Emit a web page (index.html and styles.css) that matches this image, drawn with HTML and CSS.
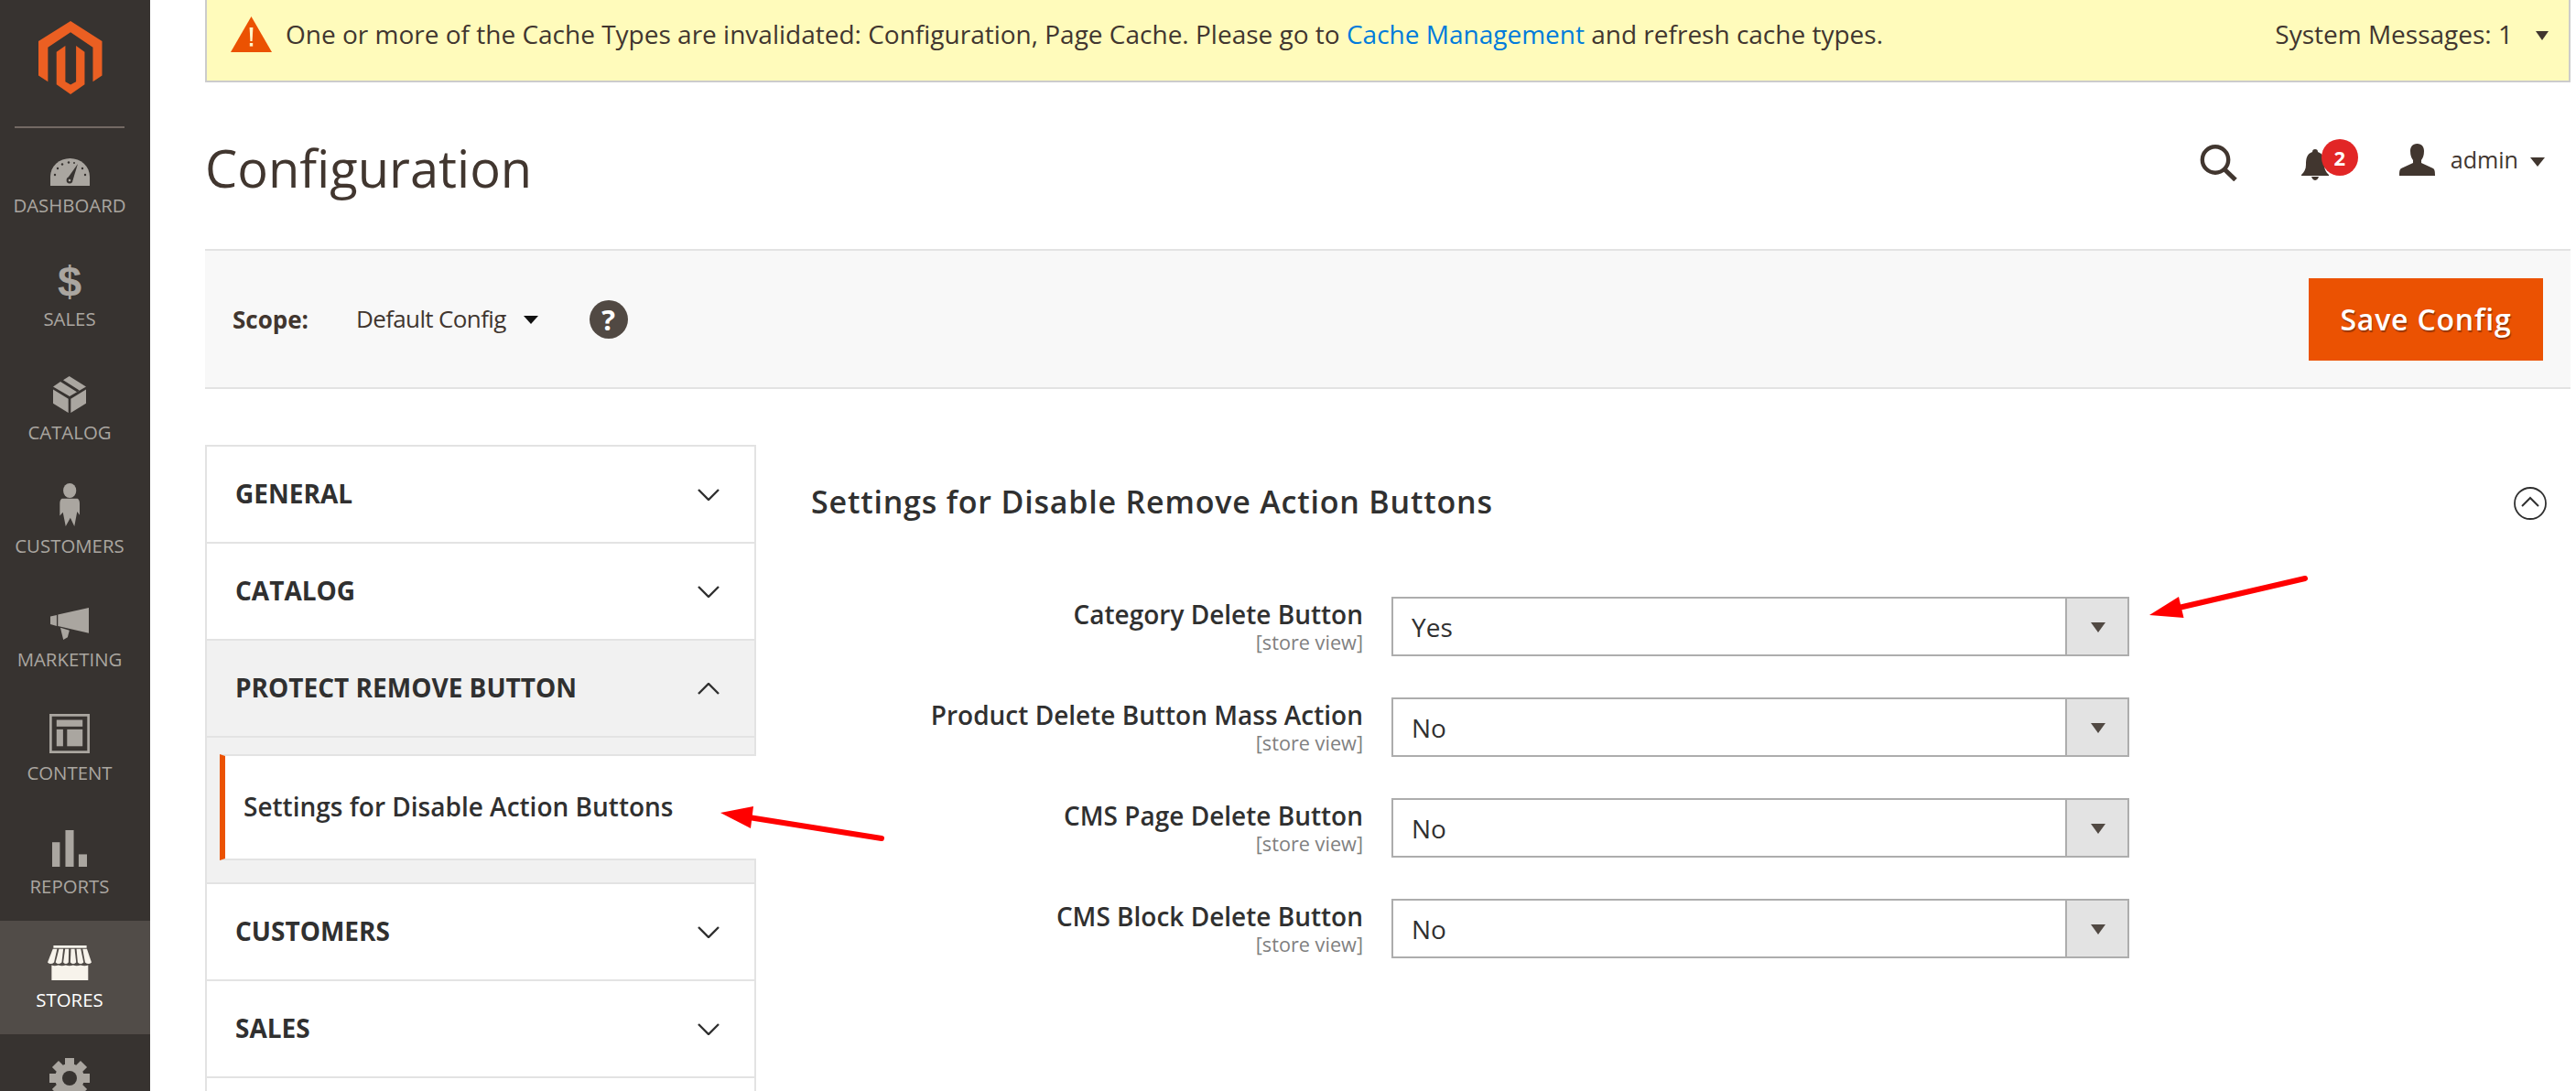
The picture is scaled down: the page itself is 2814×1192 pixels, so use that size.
FILE: index.html
```html
<!DOCTYPE html>
<html lang="en">
<head>
<meta charset="utf-8">
<title>Configuration</title>
<link rel="stylesheet" href="styles.css">
</head>
<body>
<div class="page">
  <aside class="sidebar">
    <div class="logo">
      <svg class="logo-svg" viewBox="127 60 208 208" preserveAspectRatio="none"><path fill="#eb5f22" d="M232 60L335 117V215L305 232V135L232 92L158 135V232L127 215V117Z"/><path fill="#eb5f22" d="M186 148L215 130V232L232 241L250 232V130L278 148V240L232 268L186 240Z"/></svg>
    </div>
    <nav class="menu">
      <a class="menu-item first">
        <svg class="ic" width="43" height="30" viewBox="0 0 43 30"><path fill="#aaa6a0" d="M0 30V20A21.5 20 0 0 1 43 20V30Z"/><g fill="#373330"><path d="M30 6L24.5 24L19 21.5Z"/><circle cx="21" cy="24" r="3.4"/><circle cx="5" cy="18" r="1.2"/><circle cx="8" cy="11" r="1.2"/><circle cx="13" cy="6.5" r="1.2"/><circle cx="20" cy="4.5" r="1.2"/><circle cx="26" cy="5" r="1"/><circle cx="35" cy="11" r="1.2"/><circle cx="38" cy="18" r="1.2"/></g><circle cx="21" cy="24" r="1.3" fill="#aaa6a0"/></svg>
        <span>Dashboard</span>
      </a>
      <a class="menu-item">
        <span class="dollar">$</span>
        <span>Sales</span>
      </a>
      <a class="menu-item">
        <svg class="ic" width="36" height="40" viewBox="172 1077 108 105" preserveAspectRatio="none"><g fill="#aaa6a0"><path d="M225 1077L280 1107L226 1135L172 1107L196 1093L250 1122L258 1118L205 1088Z"/><path d="M172 1115L222 1142V1182L172 1155Z"/><path d="M280 1115L230 1142V1182L280 1155Z"/></g></svg>
        <span>Catalog</span>
      </a>
      <a class="menu-item">
        <svg class="ic" width="22" height="47" viewBox="197 1377 65 123" preserveAspectRatio="none"><g fill="#aaa6a0"><ellipse cx="230" cy="1398" rx="21" ry="21"/><path d="M205 1421L255 1421Q262 1424 262 1435V1468L254 1458L245 1500L232 1476L217 1500L208 1460L198 1470V1435Q198 1424 205 1421Z"/></g></svg>
        <span>Customers</span>
      </a>
      <a class="menu-item">
        <svg class="ic" width="42" height="35" viewBox="165 172 127 93" preserveAspectRatio="none"><g fill="#aaa6a0"><path d="M190 192L292 172V246L190 225Z"/><path d="M165 197L186 193V225L165 220Z"/><path d="M198 230L228 238L222 258L208 265Z"/></g></svg>
        <span>Marketing</span>
      </a>
      <a class="menu-item">
        <svg class="ic" width="44" height="43" viewBox="163 478 130 112" preserveAspectRatio="none"><g fill="#aaa6a0"><path fill-rule="evenodd" d="M163 478H293V590H163ZM171 485V583H285V485Z"/><rect x="186" y="495" width="84" height="19"/><rect x="186" y="522" width="21" height="48"/><rect x="220" y="522" width="50" height="48"/></g></svg>
        <span>Content</span>
      </a>
      <a class="menu-item">
        <svg class="ic" width="38" height="40" viewBox="172 817 113 106" preserveAspectRatio="none"><g fill="#aaa6a0"><rect x="172" y="852" width="25" height="71"/><rect x="215" y="817" width="27" height="106"/><rect x="258" y="887" width="27" height="36"/></g></svg>
        <span>Reports</span>
      </a>
      <a class="menu-item current">
        <svg class="ic" width="48" height="38" viewBox="155 1155 143 101" preserveAspectRatio="none"><g fill="#f7f3eb"><path d="M174 1155H282V1162H174Z"/><path d="M172 1165H186L176 1204Q165 1212 155 1204Z"/><path d="M192 1165H206L201 1204Q190 1212 181 1204Z"/><path d="M212 1165H224L223 1204Q214 1212 206 1204Z"/><path d="M231 1165H243L248 1204Q238 1212 229 1204Z"/><path d="M249 1165H263L272 1204Q262 1212 253 1204Z"/><path d="M269 1165H283L298 1204Q288 1212 277 1204Z"/><path d="M168 1212Q178 1216 190 1212Q202 1216 214 1212Q226 1216 238 1212Q250 1216 262 1212Q276 1216 287 1212V1256H168Z"/></g></svg>
        <span>Stores</span>
      </a>
      <a class="menu-item">
        <svg class="ic gear" width="44" height="44" viewBox="-22 -22 44 44"><g fill="#aaa6a0"><circle r="16"/><rect x="-5" y="-22" width="10" height="44"/><rect x="-5" y="-22" width="10" height="44" transform="rotate(45)"/><rect x="-5" y="-22" width="10" height="44" transform="rotate(90)"/><rect x="-5" y="-22" width="10" height="44" transform="rotate(135)"/></g><circle r="8" fill="#373330"/></svg>
      </a>
    </nav>
  </aside>

  <main class="main">
    <div class="notice">
      <div class="notice-text">
        <svg class="warn" width="45" height="39" viewBox="0 0 45 39"><path fill="#eb5202" d="M22.5 0L45 39H0Z"/><path fill="#fff6c8" d="M20.6 12H24.4L23.6 27H21.4Z"/><rect x="20.8" y="29" width="3.4" height="3.6" fill="#fff6c8"/></svg>
        <span>One or more of the Cache Types are invalidated: Configuration, Page Cache. Please go to <a class="link">Cache Management</a> and refresh cache types.</span>
      </div>
      <div class="notice-count">System Messages: 1<i class="caret caret-msg"></i></div>
    </div>

    <header class="head">
      <h1 class="title">Configuration</h1>
      <div class="actions">
        <svg class="search" width="42" height="40" viewBox="0 0 42 40"><circle cx="17" cy="16.5" r="14.2" fill="none" stroke="#41362f" stroke-width="4.4"/><path d="M27 27L39 38.5" stroke="#41362f" stroke-width="5"/></svg>
        <div class="bell-wrap">
          <svg class="bell" width="30" height="34" viewBox="0 0 30 34"><path fill="#41362f" d="M15 0C17 0 18 1 18 3C24 5 25 10 25 17C25 22 27 25 30 28V29H0V28C3 25 5 22 5 17C5 10 6 5 12 3C12 1 13 0 15 0Z"/><path fill="#41362f" d="M11 30H19C18 33 16 34 15 34C14 34 12 33 11 30Z"/></svg>
          <span class="badge">2</span>
        </div>
        <div class="user">
          <svg class="user-ic" width="39" height="35" viewBox="0 0 39 35"><path fill="#41362f" d="M19.5 0C25 0 27 4 27 8C27 13 25.500 16 24 18V21L37 27C38.500 28 39 30 39 35H0C0 30 .5 28 2 27L15 21V18C13.500 16 12 13 12 8C12 4 14 0 19.500 0Z"/></svg>
          <span class="user-name">admin</span>
          <i class="caret caret-user"></i>
        </div>
      </div>
    </header>

    <div class="scope">
      <div class="scope-left">
        <span class="scope-label">Scope:</span>
        <span class="scope-value">Default Config<i class="caret caret-scope"></i></span>
        <span class="help">?</span>
      </div>
      <button class="save">Save Config</button>
    </div>

    <div class="content">
      <div class="tabs">
        <div class="tab"><span>General</span><svg class="chev" width="24" height="13" viewBox="0 0 24 13"><path d="M1 1L12 12L23 1" fill="none" stroke="#303030" stroke-width="2.4"/></svg></div>
        <div class="tab"><span>Catalog</span><svg class="chev" width="24" height="13" viewBox="0 0 24 13"><path d="M1 1L12 12L23 1" fill="none" stroke="#303030" stroke-width="2.4"/></svg></div>
        <div class="group">
          <div class="tab open"><span>Protect Remove Button</span><svg class="chev" width="24" height="13" viewBox="0 0 24 13"><path d="M1 12L12 1L23 12" fill="none" stroke="#303030" stroke-width="2.4"/></svg></div>
          <div class="sublist"><a class="subitem">Settings for Disable Action Buttons</a></div>
        </div>
        <div class="tab"><span>Customers</span><svg class="chev" width="24" height="13" viewBox="0 0 24 13"><path d="M1 1L12 12L23 1" fill="none" stroke="#303030" stroke-width="2.4"/></svg></div>
        <div class="tab"><span>Sales</span><svg class="chev" width="24" height="13" viewBox="0 0 24 13"><path d="M1 1L12 12L23 1" fill="none" stroke="#303030" stroke-width="2.4"/></svg></div>
        <div class="tab"></div>
      </div>

      <section class="panel">
        <div class="panel-head">
          <h2 class="panel-title">Settings for Disable Remove Action Buttons</h2>
          <svg class="collapse" width="36" height="36" viewBox="0 0 36 36"><circle cx="18" cy="18" r="17" fill="none" stroke="#303030" stroke-width="1.8"/><path d="M9 21L18 12L27 21" fill="none" stroke="#303030" stroke-width="2"/></svg>
        </div>
        <div class="form">
          <div class="field">
            <div class="field-label"><div class="label">Category Delete Button</div><div class="hint">[store view]</div></div>
            <div class="select"><span class="select-value">Yes</span><span class="select-btn"><i class="tri"></i></span></div>
          </div>
          <div class="field">
            <div class="field-label"><div class="label">Product Delete Button Mass Action</div><div class="hint">[store view]</div></div>
            <div class="select"><span class="select-value">No</span><span class="select-btn"><i class="tri"></i></span></div>
          </div>
          <div class="field">
            <div class="field-label"><div class="label">CMS Page Delete Button</div><div class="hint">[store view]</div></div>
            <div class="select"><span class="select-value">No</span><span class="select-btn"><i class="tri"></i></span></div>
          </div>
          <div class="field">
            <div class="field-label"><div class="label">CMS Block Delete Button</div><div class="hint">[store view]</div></div>
            <div class="select"><span class="select-value">No</span><span class="select-btn"><i class="tri"></i></span></div>
          </div>
        </div>
      </section>
    </div>

    <svg class="arrows" width="2814" height="1192" viewBox="0 0 2814 1192">
      <g fill="#ff0000" stroke="#ff0000">
        <path d="M963 916L818 893" stroke-width="6" stroke-linecap="round"/>
        <path d="M787 888L823 881L820 905Z" stroke="none"/>
        <path d="M2518 632L2380 664" stroke-width="6" stroke-linecap="round"/>
        <path d="M2348 672L2380 652L2385.500 675Z" stroke="none"/>
      </g>
    </svg>
  </main>
</div>
</body>
</html>
```

FILE: styles.css
```css
* { box-sizing: border-box; }
html, body { margin: 0; height: 1192px; overflow: hidden; background: #fff; }
body { font-family: "Open Sans", "Liberation Sans", sans-serif; color: #41362f; }
h1, h2 { margin: 0; }
.page { display: flex; height: 1192px; overflow: hidden; }

.sidebar { width: 164px; flex: none; background: #373330; height: 1192px; overflow: hidden; }
.logo { height: 140px; margin: 0 28px 0 16px; border-bottom: 2px solid #736963; padding: 23px 0 0 26px; }
.logo-svg { display: block; width: 69.5px; height: 80px; }
.menu { display: flex; flex-direction: column; }
.menu-item { height: 124px; flex: none; display: flex; flex-direction: column; align-items: center; justify-content: flex-end; padding: 0 12px 24px 0; color: #aaa6a0; font-size: 20.4px; line-height: 28px; text-transform: uppercase; }
.menu-item.first { height: 122px; }
.menu-item .ic { display: block; margin-bottom: 7px; }
.menu-item.current { background: #514c48; color: #fff; }
.menu-item .gear { margin: 26px 0 0; align-self: center; }
.menu-item:last-child { justify-content: flex-start; padding: 0 12px 0 0; }
.dollar { font-family: "Liberation Sans", sans-serif; font-weight: 700; font-size: 47px; line-height: 46px; margin-bottom: 3px; }

.main { flex: 1; min-width: 0; padding: 0 6px 0 60px; position: relative; }
.notice { height: 90px; background: #fffbbb; border: 2px solid #ccc; border-top: 0; display: flex; justify-content: space-between; padding: 0 22px 0 26px; font-size: 28px; line-height: 34px; color: #41362f; }
.notice-text { display: flex; align-items: flex-start; gap: 15px; padding-top: 20px; }
.warn { display: block; margin-top: -2px; }
.link { color: #007bdb; }
.notice-count { padding-top: 20px; display: flex; align-items: flex-start; }
.caret { display: inline-block; width: 0; height: 0; border-style: solid; border-color: #41362f transparent transparent; }
.caret-msg { border-width: 10px 7.5px 0; margin: 14px 0 0 25px; }
.head { height: 182px; display: flex; justify-content: space-between; padding-right: 28px; }
.title { font-size: 56px; font-weight: 400; line-height: 72px; margin-top: 57px; color: #41362f; }
.actions { display: flex; align-items: flex-start; }
.search { display: block; margin-top: 68px; }
.bell-wrap { display: flex; margin: 62px 0 0 69px; position: relative; width: 61px; height: 44px; }
.bell { display: block; margin-top: 11px; }
.badge { position: absolute; left: 22px; top: 0; width: 40px; height: 40px; border-radius: 50%; background: #e22626; color: #fff; font-weight: 700; font-size: 22px; line-height: 40px; text-align: center; }
.user { display: flex; align-items: flex-start; margin: 67px 0 0 46px; font-size: 25.1px; line-height: 34px; }
.user-ic { display: block; }
.user-name { margin-left: 17px; }
.caret-user { border-width: 10px 8px 0; margin: 15px 0 0 13px; }

.scope { height: 153px; background: #f8f8f8; border-top: 2px solid #e3e3e3; border-bottom: 2px solid #e3e3e3; display: flex; align-items: center; justify-content: space-between; padding: 0 30px; }
.scope-left { display: flex; align-items: center; font-size: 26px; line-height: 34px; }
.scope-label { font-weight: 700; }
.scope-value { margin-left: 52px; margin-top: -1px; display: flex; align-items: center; letter-spacing: -.64px; }
.caret-scope { border-width: 9px 8px 0; border-color: #111 transparent transparent; margin: 3px 0 0 19px; }
.help { margin-left: 56px; width: 42px; height: 42px; border-radius: 50%; background: #514943; color: #fff; font-weight: 700; font-size: 31px; line-height: 42px; text-align: center; }
.save { width: 256px; height: 90px; border: 0; background: #eb5202; color: #fff; font: 600 32px "Open Sans", sans-serif; letter-spacing: .8px; text-shadow: 1px 2px 1px rgba(0,0,0,.35); padding: 0; }

.content { display: grid; grid-template-columns: 602px 1fr; column-gap: 60px; padding-top: 61px; }
.tabs { border-top: 2px solid #e3e3e3; border-left: 2px solid #e3e3e3; border-right: 2px solid #e3e3e3; }
.tab { height: 106px; border-bottom: 2px solid #e3e3e3; display: flex; align-items: center; justify-content: space-between; padding: 0 38px 0 31px; font-weight: 700; font-size: 28px; text-transform: uppercase; color: #303030; }
.tab span { margin-bottom: 2px; }
.group { background: #f1f1f1; border-bottom: 2px solid #e3e3e3; }
.sublist { padding: 18px 0 24px 14px; }
.subitem { display: flex; align-items: center; height: 116px; margin-right: -2px; position: relative; background: #fff; border-left: 6px solid #eb5202; border-top: 2px solid #e3e3e3; border-bottom: 2px solid #e3e3e3; padding: 0 0 2px 20px; font-weight: 600; font-size: 28px; color: #303030; }

.panel { min-width: 0; padding-right: 26px; }
.panel-head { height: 124px; display: flex; align-items: center; justify-content: space-between; }
.panel-title { font-size: 34px; font-weight: 600; color: #303030; letter-spacing: .8px; }
.collapse { display: block; margin-top: 4px; }
.form { padding-top: 42px; display: flex; flex-direction: column; gap: 45px; }
.field { display: grid; grid-template-columns: 603px 806px; column-gap: 31px; }
.field-label { text-align: right; padding-top: 2px; }
.label { font-weight: 600; font-size: 28px; line-height: 35px; color: #303030; }
.hint { font-size: 21.7px; line-height: 25px; color: #808080; }
.select { height: 65px; border: 2px solid #adadad; display: flex; justify-content: space-between; }
.select-value { padding: 14px 0 0 20px; font-size: 28px; line-height: 34px; color: #303030; }
.select-btn { width: 68px; background: #e3e3e3; border-left: 2px solid #adadad; display: flex; align-items: center; justify-content: center; padding-left: 2px; }
.tri { display: block; width: 0; height: 0; border-style: solid; border-width: 11px 8.500px 0; border-color: #514943 transparent transparent; margin-top: 2px; }

.arrows { position: absolute; left: -164px; top: 0; pointer-events: none; }
```
